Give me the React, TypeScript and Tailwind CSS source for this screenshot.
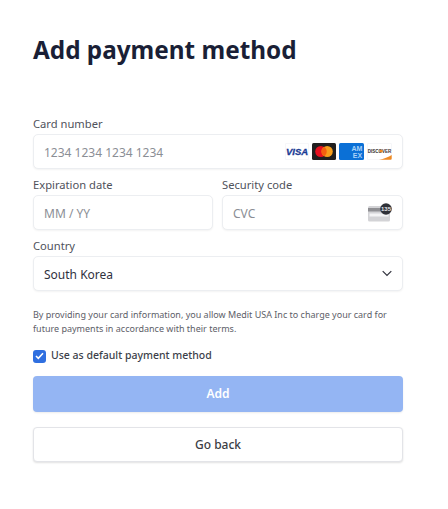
const font = { fontFamily: "'Noto Sans', sans-serif" };

function CardLogos() {
  return (
    <div className="flex items-center gap-[3px]">
      <svg width="24" height="17" viewBox="0 0 24 17">
        <rect x="0.25" y="0.25" width="23.5" height="16.5" rx="1.5" fill="#fff" stroke="#e8e8ee" strokeWidth="0.5" />
        <text x="12" y="12" textAnchor="middle" fontSize="9.500" fontWeight="800" fontStyle="italic" fill="#1a3a94" stroke="#1a3a94" strokeWidth="0.3" fontFamily="Liberation Sans, sans-serif">VISA</text>
      </svg>
      <svg width="24" height="17" viewBox="0 0 24 17">
        <rect width="24" height="17" rx="1.5" fill="#211f1f" />
        <circle cx="8.800" cy="8.500" r="5.600" fill="#e8101f" />
        <circle cx="15.200" cy="8.500" r="5.600" fill="#f79e1b" />
        <path d="M12 3.700a5.600 5.600 0 0 1 0 9.600a5.600 5.600 0 0 1 0-9.600z" fill="#f5600f" />
      </svg>
      <svg width="25" height="17" viewBox="0 0 25 17">
        <rect width="25" height="17" rx="1.5" fill="#0b70d6" />
        <text x="18" y="8" textAnchor="middle" fontSize="7" fontWeight="700" fill="#a9d2f8" fontFamily="Liberation Sans, sans-serif">AM</text>
        <text x="18.500" y="15" textAnchor="middle" fontSize="7" fontWeight="700" fill="#a9d2f8" fontFamily="Liberation Sans, sans-serif">EX</text>
      </svg>
      <svg width="25" height="17" viewBox="0 0 25 17">
        <rect x="0.25" y="0.25" width="24.500" height="16.500" rx="1.5" fill="#fff" stroke="#e8e8ee" strokeWidth="0.5" />
        <text x="12.500" y="9.500" textAnchor="middle" fontSize="4.500" fontWeight="700" fill="#33302e" fontFamily="Liberation Sans, sans-serif">DISCOVER</text>
        <circle cx="14.100" cy="8" r="1.600" fill="#f08a24" />
        <path d="M12 16.700C17 15.800 21.500 14.300 24.700 12v3.500a1.200 1.200 0 0 1-1.200 1.200z" fill="#ee8a23" />
      </svg>
    </div>
  );
}

function CvcIcon() {
  return (
    <svg width="25" height="19" viewBox="0 0 25 19">
      <rect x="1" y="3" width="22" height="15.500" rx="1.500" fill="#d3d3d6" />
      <rect x="1" y="5" width="22" height="3.500" fill="#8f8f93" />
      <rect x="2.500" y="10.500" width="19" height="3" fill="#f4f4f5" />
      <circle cx="19" cy="6" r="5.800" fill="#2f3138" />
      <text x="19" y="8.200" textAnchor="middle" fontSize="6" fontWeight="700" fill="#e8e8ea" fontFamily="Liberation Sans, sans-serif">135</text>
    </svg>
  );
}

function Field({ label, placeholder, right, className }: { label: string; placeholder: string; right?: React.ReactNode; className?: string }) {
  return (
    <div className={className}>
      <div className="mb-[1px] text-[11.2px] leading-[19px] text-[#4f525b]">{label}</div>
      <div className="flex h-[35px] items-center justify-between rounded-[5px] border border-[#eceef1] bg-white pl-[10px] pr-[10px] shadow-[0_1px_2px_rgba(0,0,0,0.05)]">
        <span className="pt-[2px] text-[12px] text-[#8b8e95]">{placeholder}</span>
        {right}
      </div>
    </div>
  );
}

export default function App() {
  return (
    <div className="h-[509px] w-[448px] bg-white pl-[33px] pr-[45px] pt-[32px]" style={font}>
      <h1 className="text-[24.300px] font-bold leading-[36px] text-[#1a1f36]">Add payment method</h1>

      <div className="mt-[46px] flex flex-col gap-[6px]">
        <Field label="Card number" placeholder="1234 1234 1234 1234" right={<CardLogos />} />
        <div className="flex gap-[9px]">
          <Field label="Expiration date" placeholder="MM / YY" className="w-[180px]" />
          <Field label="Security code" placeholder="CVC" className="flex-1" right={<CvcIcon />} />
        </div>
        <div>
          <div className="mb-[1px] text-[11.2px] leading-[19px] text-[#4f525b]">Country</div>
          <div className="flex h-[35px] items-center justify-between rounded-[5px] border border-[#eceef1] bg-white pl-[10px] pr-[10px] shadow-[0_1px_2px_rgba(0,0,0,0.05)]">
            <span className="pt-[2px] text-[12px] text-[#30313d]">South Korea</span>
            <svg width="10" height="7" viewBox="0 0 10 7" fill="none">
              <path d="M0.700 1.200l4.300 4.300 4.300-4.300" stroke="#30313d" strokeWidth="1.200" />
            </svg>
          </div>
        </div>
      </div>

      <p className="mt-[17px] text-[9px] leading-[14px] text-[#5d6068]">
        By providing your card information, you allow Medit USA Inc to charge your card for future payments in accordance with their terms.
      </p>

      <label className="mt-[12px] flex h-[16px] items-center gap-[5px]">
        <span className="flex h-[13px] w-[13px] items-center justify-center rounded-[3px] bg-[#2f6fe0]">
          <svg width="9" height="8" viewBox="0 0 9 8" fill="none">
            <path d="M1 4l2.300 2.300L8 1.300" stroke="#fff" strokeWidth="1.600" />
          </svg>
        </span>
        <span className="text-[10.500px] font-medium text-[#3c3f4a]">Use as default payment method</span>
      </label>

      <button className="mt-[12px] block h-[36px] w-[370px] rounded-[4px] bg-[#94b5f3] text-[12px] font-semibold text-white shadow-[0_1px_2px_rgba(0,0,0,0.08)]">
        Add
      </button>
      <button className="mt-[15px] block h-[35px] w-[370px] rounded-[4px] border border-[#e3e4e8] bg-white text-[12px] font-medium text-[#3b3c44] shadow-[0_1px_2px_rgba(0,0,0,0.12)]">
        Go back
      </button>
    </div>
  );
}
